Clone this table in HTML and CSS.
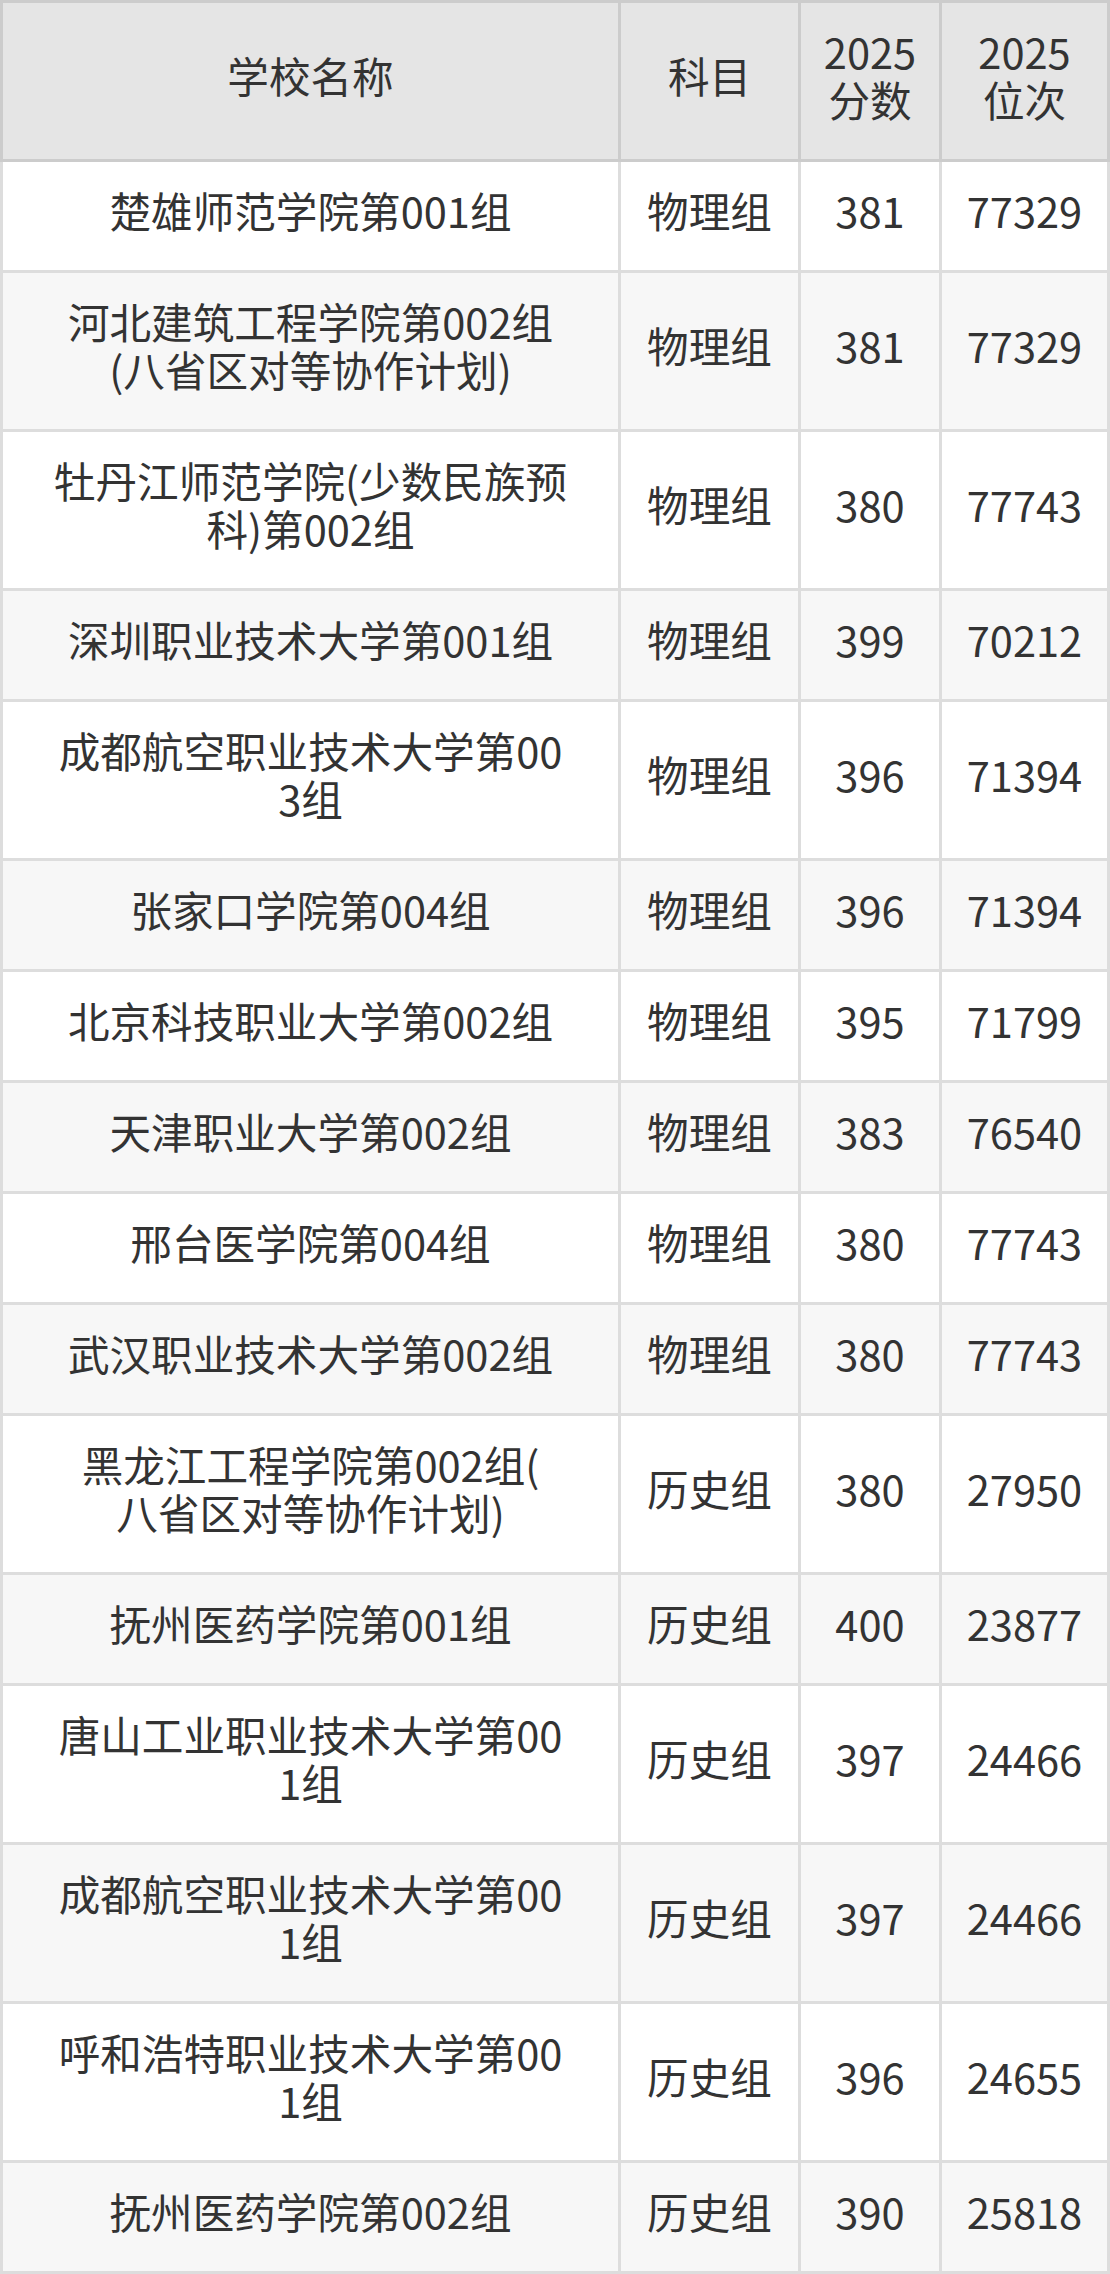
FILE: index.html
```html
<!DOCTYPE html>
<html lang="zh-CN">
<head>
<meta charset="utf-8">
<title>院校分数线</title>
<link rel="stylesheet" href="styles.css">
</head>
<body>
<div class="score-table">
  <div class="row head">
    <div class="cell">学校名称</div>
    <div class="cell">科目</div>
    <div class="cell">2025<br>分数</div>
    <div class="cell">2025<br>位次</div>
  </div>
  <div class="row">
    <div class="cell">楚雄师范学院第001组</div>
    <div class="cell">物理组</div>
    <div class="cell">381</div>
    <div class="cell">77329</div>
  </div>
  <div class="row">
    <div class="cell">河北建筑工程学院第002组<br>(八省区对等协作计划)</div>
    <div class="cell">物理组</div>
    <div class="cell">381</div>
    <div class="cell">77329</div>
  </div>
  <div class="row">
    <div class="cell">牡丹江师范学院(少数民族预<br>科)第002组</div>
    <div class="cell">物理组</div>
    <div class="cell">380</div>
    <div class="cell">77743</div>
  </div>
  <div class="row">
    <div class="cell">深圳职业技术大学第001组</div>
    <div class="cell">物理组</div>
    <div class="cell">399</div>
    <div class="cell">70212</div>
  </div>
  <div class="row">
    <div class="cell">成都航空职业技术大学第00<br>3组</div>
    <div class="cell">物理组</div>
    <div class="cell">396</div>
    <div class="cell">71394</div>
  </div>
  <div class="row">
    <div class="cell">张家口学院第004组</div>
    <div class="cell">物理组</div>
    <div class="cell">396</div>
    <div class="cell">71394</div>
  </div>
  <div class="row">
    <div class="cell">北京科技职业大学第002组</div>
    <div class="cell">物理组</div>
    <div class="cell">395</div>
    <div class="cell">71799</div>
  </div>
  <div class="row">
    <div class="cell">天津职业大学第002组</div>
    <div class="cell">物理组</div>
    <div class="cell">383</div>
    <div class="cell">76540</div>
  </div>
  <div class="row">
    <div class="cell">邢台医学院第004组</div>
    <div class="cell">物理组</div>
    <div class="cell">380</div>
    <div class="cell">77743</div>
  </div>
  <div class="row">
    <div class="cell">武汉职业技术大学第002组</div>
    <div class="cell">物理组</div>
    <div class="cell">380</div>
    <div class="cell">77743</div>
  </div>
  <div class="row">
    <div class="cell">黑龙江工程学院第002组(<br>八省区对等协作计划)</div>
    <div class="cell">历史组</div>
    <div class="cell">380</div>
    <div class="cell">27950</div>
  </div>
  <div class="row">
    <div class="cell">抚州医药学院第001组</div>
    <div class="cell">历史组</div>
    <div class="cell">400</div>
    <div class="cell">23877</div>
  </div>
  <div class="row">
    <div class="cell">唐山工业职业技术大学第00<br>1组</div>
    <div class="cell">历史组</div>
    <div class="cell">397</div>
    <div class="cell">24466</div>
  </div>
  <div class="row">
    <div class="cell">成都航空职业技术大学第00<br>1组</div>
    <div class="cell">历史组</div>
    <div class="cell">397</div>
    <div class="cell">24466</div>
  </div>
  <div class="row">
    <div class="cell">呼和浩特职业技术大学第00<br>1组</div>
    <div class="cell">历史组</div>
    <div class="cell">396</div>
    <div class="cell">24655</div>
  </div>
  <div class="row">
    <div class="cell">抚州医药学院第002组</div>
    <div class="cell">历史组</div>
    <div class="cell">390</div>
    <div class="cell">25818</div>
  </div>
</div>
</body>
</html>
```

FILE: styles.css
```css
html, body {
  margin: 0;
  padding: 0;
  background: #ffffff;
}

body {
  font-family: "Noto Sans CJK SC", "Noto Sans", sans-serif;
  color: #333333;
}

.score-table {
  display: grid;
  grid-template-columns: 615px 177px 138px 165px;
  gap: 3px;
  padding: 3px;
  width: 1110px;
  box-sizing: border-box;
  background: #dddddd;
}

.row {
  display: contents;
}

.cell {
  display: flex;
  align-items: center;
  justify-content: center;
  text-align: center;
  white-space: nowrap;
  font-size: 41.6px;
  line-height: 48px;
  padding: 24px 0 36px;
  background: #ffffff;
}

.row:nth-child(odd) .cell {
  background: #f7f7f7;
}

.row.head .cell {
  background: #e5e5e5;
  box-shadow: 0 0 0 3px #cccccc;
}
```
